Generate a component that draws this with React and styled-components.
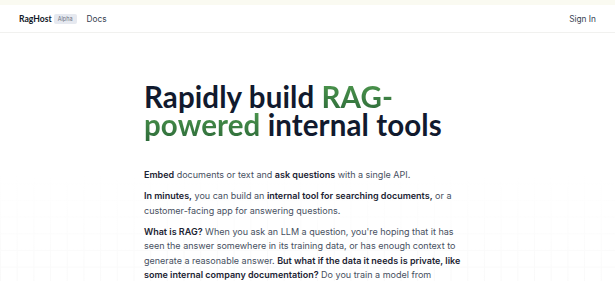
import React from 'react'
import styled, { createGlobalStyle } from 'styled-components'

const GlobalStyle = createGlobalStyle`
  html, body {
    margin: 0;
    padding: 0;
    background: #ffffff;
  }
  body {
    font-family: Inter, 'Liberation Sans', sans-serif;
    color: #4b5563;
  }
`

const Page = styled.div`
  min-height: 281px;
  display: flex;
  flex-direction: column;
`

const TopStrip = styled.div`
  height: 5px;
  background: #fafaf1;
`

const Header = styled.header`
  height: 27px;
  display: flex;
  align-items: center;
  justify-content: space-between;
  padding: 0 19px;
  border-bottom: 1px solid #f1f1ef;
`

const NavGroup = styled.nav`
  display: flex;
  align-items: center;
`

const Brand = styled.span`
  font-family: Lato, sans-serif;
  font-weight: 700;
  font-size: 8.6px;
  color: #111827;
`

const Badge = styled.span`
  margin-left: 2px;
  padding: 2px 4px;
  border-radius: 2px;
  background: #e6e9f0;
  color: #6b7280;
  font-size: 5.5px;
`

const NavLink = styled.a`
  margin-left: ${p => p.$gap || 0}px;
  font-size: 8.3px;
  color: #374151;
  text-decoration: none;
`

const Main = styled.main`
  flex: 1;
  padding-top: 50px;
  background:
    linear-gradient(to bottom, #ffffff 0, #ffffff 140px, rgba(255, 255, 255, 0.55) 250px),
    linear-gradient(to right, #f2f2f2 1px, transparent 1px),
    linear-gradient(to bottom, #f2f2f2 1px, transparent 1px);
  background-size: 100% 100%, 16.7px 16.7px, 16.7px 16.7px;
`

const Content = styled.div`
  width: 327px;
  margin: 0 auto;
`

const Title = styled.h1`
  margin: 0 0 29px;
  font-family: Lato, 'Liberation Sans', sans-serif;
  font-size: 29.5px;
  line-height: 28px;
  font-weight: 700;
  color: #111a2e;
  letter-spacing: 0.1px;
`

const Accent = styled.span`
  background: linear-gradient(to bottom, #4f9a4f, #2d6a39);
  -webkit-background-clip: text;
  background-clip: text;
  color: transparent;
`

const Para = styled.p`
  margin: 0 0 6.4px;
  font-size: 9px;
  line-height: 14.6px;
  color: #475061;
`

const Strong = styled.strong`
  font-weight: 600;
  color: #1c2433;
`

export default function App () {
  return (
    <>
      <GlobalStyle />
      <Page>
        <TopStrip />
        <Header>
          <NavGroup>
            <Brand>RagHost</Brand>
            <Badge>Alpha</Badge>
            <NavLink $gap={10}>Docs</NavLink>
          </NavGroup>
          <NavLink>Sign In</NavLink>
        </Header>
        <Main>
          <Content>
            <Title>
              Rapidly build <Accent>RAG-<br />powered</Accent> internal tools
            </Title>
            <Para>
              <Strong>Embed</Strong> documents or text and <Strong>ask questions</Strong> with a single API.
            </Para>
            <Para>
              <Strong>In minutes,</Strong> you can build an <Strong>internal tool for searching documents,</Strong> or a customer-facing app for answering questions.
            </Para>
            <Para>
              <Strong>What is RAG?</Strong> When you ask an LLM a question, you're hoping that it has seen the answer somewhere in its training data, or has enough context to generate a reasonable answer. <Strong>But what if the data it needs is private, like some internal company documentation?</Strong> Do you train a model from proprietary data? That's expensive and slow.
            </Para>
          </Content>
        </Main>
      </Page>
    </>
  )
}
